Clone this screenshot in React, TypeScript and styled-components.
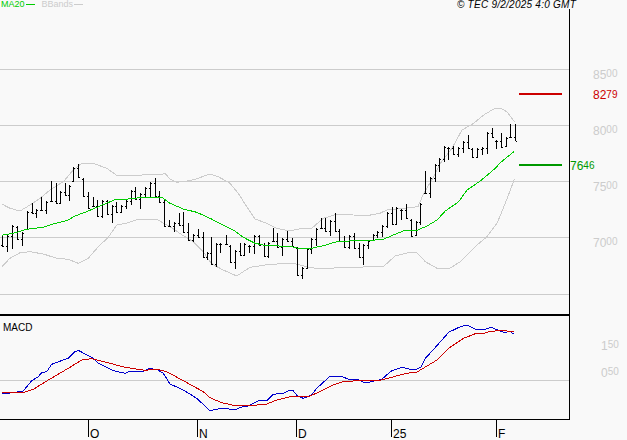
import React from "react";
import styled, { createGlobalStyle } from "styled-components";

type P = [number, number];

const Global = createGlobalStyle`
  html, body { margin: 0; padding: 0; background: #f9f9f9; overflow: hidden; }
  body { font-family: "Liberation Sans", Arial, sans-serif; }
`;

const Chart = styled.div`
  position: relative;
  width: 627px;
  height: 440px;
  background: #f9f9f9;
  display: flex;
  flex-direction: column;
  overflow: hidden;
`;

const Header = styled.header`
  width: 576px;
  height: 9px;
  display: flex;
  justify-content: space-between;
  line-height: 9px;
  white-space: nowrap;
`;

const Legend = styled.div`
  display: flex;
  align-items: center;
  padding-left: 1px;
  font-size: 9px;
`;

const LegendName = styled.span<{ $color: string }>`
  color: ${(p) => p.$color};
  margin-right: 1px;
`;

const LegendSwatch = styled.i<{ $color: string; $gap: number }>`
  display: block;
  width: 9px;
  height: 1px;
  background: ${(p) => p.$color};
  margin-right: ${(p) => p.$gap}px;
`;

const Copyright = styled.span`
  font-size: 10px;
  font-style: italic;
  letter-spacing: 0.25px;
  color: #000;
`;

const Body = styled.div`
  display: flex;
  flex: 1;
`;

const Plots = styled.div`
  width: 569px;
  display: flex;
  flex-direction: column;
`;

const Plot = styled.div<{ $height: number; $border: number }>`
  position: relative;
  height: ${(p) => p.$height}px;
  border-bottom: ${(p) => p.$border}px solid #000;
  border-right: 1px solid #000;
  box-sizing: content-box;
  width: 569px;
`;

const PlotSvg = styled.svg`
  display: block;
  width: 569px;
  height: 100%;
  shape-rendering: crispEdges;
`;

const PanelTitle = styled.span`
  position: absolute;
  left: 3px;
  top: 6px;
  font-size: 10px;
  line-height: 11px;
  color: #000;
`;

const TimeAxis = styled.div`
  position: relative;
  height: 20px;
`;

const Tick = styled.div<{ $x: number }>`
  position: absolute;
  left: ${(p) => p.$x}px;
  top: 0;
  height: 17px;
  border-left: 1px solid #000;
  padding-left: 1px;
  font-size: 12px;
  line-height: 12px;
  color: #000;
  display: flex;
  align-items: flex-end;
`;

const TickText = styled.span`
  position: relative;
  top: 3px;
`;

const ScaleLabel = styled.div<{ $x: number; $y: number; $color: string }>`
  position: absolute;
  left: ${(p) => p.$x}px;
  top: ${(p) => p.$y}px;
  color: ${(p) => p.$color};
  font-size: 12px;
  line-height: 12px;
  white-space: nowrap;
`;

const ScaleSmall = styled.span<{ $raise: number }>`
  font-size: 10px;
  position: relative;
  top: -${(p) => p.$raise}px;
`;

const seg = (ox: number, oy: number, pts: number[][]): P[] =>
  pts.map(([x, y]) => [ox + x / 3, oy + y / 3]);

const bars1 = [[7,258,292],[22,255,305],[37,226,296],[52,228,270],[65,245,287],[80,184,240],[95,160,193],[109,178,203],[122,142,182],[137,153,192],[152,94,155],[167,100,163],[179,123,163],[194,100,137],[208,105,152],[220,52,97],[235,43,85],[250,85,140],[265,125,177],[278,140,172],[291,150,200],[306,150,205],[321,150,195],[335,165,220],[349,155,190],[364,165,190],[379,150,177],[392,120,165],[406,110,150],[421,130,178],[436,110,145],[449,95,140],[464,85,140],[478,122,160],[493,150,230],[506,210,232],[521,215,245],[536,190,228],[550,185,250],[564,220,272],[578,252,277],[593,238,265],[608,245,325],[621,305,330]];
const bars2 = [[4,262,345],[18,280,350],[31,280,308],[47,255,285],[60,285,338],[76,300,357],[89,280,317],[103,280,318],[118,285,308],[133,255,312],[147,255,288],[161,280,320],[175,275,323],[190,233,275],[202,250,295],[217,265,317],[232,242,275],[247,265,290],[260,290,377],[275,350,387],[290,295,358],[304,265,312],[318,235,288],[332,205,238],[346,205,245],[361,210,258],[374,188,247],[388,238,275],[403,258,295],[418,255,298],[432,248,298],[446,280,323],[460,283,345],[473,270,298],[488,252,272],[502,242,263],[517,225,262],[531,185,235],[545,172,225],[559,172,225],[574,178,210],[587,162,208],[602,208,260],[617,212,258]];
const bars3 = [[10,370,435],[24,273,343],[38,290,355],[53,252,305],[67,235,275],[80,198,245],[94,200,240],[109,198,225],[123,200,232],[138,183,220],[152,165,208],[166,205,235],[180,205,235],[194,200,225],[209,155,223],[224,145,175],[238,180,207],[252,160,205],[266,170,200],[280,132,175],[294,132,182]];

type Bar = { x: number; top: number; bottom: number };
const toBars = (ox: number, oy: number, rows: number[][]): Bar[] =>
  rows.map(([x, t, b]) => ({ x: Math.round(ox + x / 3), top: Math.round(oy + t / 3), bottom: Math.round(oy + b / 3) }));
const bars: Bar[] = [...toBars(0, 150, bars1), ...toBars(210, 150, bars2), ...toBars(417, 80, bars3)];

const clamp = (v: number, a: number, b: number) => Math.max(a, Math.min(b, v));
const closes = bars.map((b, i) => {
  const n = bars[i + 1];
  if (!n) return b.bottom;
  const mid = (n.top + n.bottom) / 2;
  return mid < (b.top + b.bottom) / 2 ? b.top + 1 : b.bottom - 1;
});
const opens = bars.map((b, i) => (i === 0 ? b.bottom - 2 : clamp(closes[i - 1], b.top + 1, b.bottom - 1)));

const ma: P[] = [
  ...seg(0, 150, [[5,256],[40,250],[80,238],[130,232],[160,222],[200,212],[225,198],[265,183],[300,168],[345,149],[385,147],[420,143],[485,142],[510,160],[550,177],[590,187]]),
  ...seg(210, 150, [[0,205],[40,225],[70,240],[100,262],[135,280],[170,287],[240,289],[275,297],[305,295],[340,287],[380,275],[435,272],[460,273],[520,268],[550,255],[585,241]]),
  ...seg(417, 80, [[0,451],[30,438],[60,420],[85,393],[125,365],[150,330],[190,303],[235,265],[250,248],[292,214]]),
];
const upper: P[] = [
  ...seg(0, 150, [[5,162],[30,175],[60,183],[90,165],[120,145],[150,120],[190,95],[220,60],[245,40],[280,40],[320,55],[350,76],[420,76],[445,72],[480,75],[495,70],[510,87],[530,97],[570,92],[590,86]]),
  ...seg(210, 150, [[0,72],[25,80],[60,100],[85,130],[110,170],[135,207],[170,220],[200,235],[240,243],[275,235],[305,235],[340,205],[380,193],[430,195],[470,197],[510,190],[530,180],[580,175]]),
  ...seg(417, 80, [[3,380],[20,340],[50,290],[70,250],[105,205],[135,150],[170,130],[200,105],[230,87],[250,85],[270,95],[292,125]]),
];
const lower: P[] = [
  ...seg(0, 150, [[5,350],[30,325],[60,308],[90,305],[130,312],[170,325],[205,328],[235,340],[265,325],[295,290],[325,262],[350,225],[385,218],[415,208],[470,208],[510,230],[550,257],[580,275],[610,305]]),
  ...seg(210, 150, [[0,335],[15,347],[40,360],[80,378],[120,352],[180,343],[250,340],[290,350],[330,357],[400,352],[520,350],[555,318],[600,307]]),
  ...seg(417, 80, [[0,518],[25,545],[60,565],[95,567],[130,545],[180,495],[210,470],[240,430],[265,370],[292,298]]),
];
const macd: P[] = [
  ...seg(0, 310, [[6,250],[25,252],[35,247],[68,245],[95,212],[115,200],[125,188],[140,185],[155,163],[190,150],[205,145],[225,125],[235,121],[280,145],[295,160],[340,182],[375,190],[390,184],[430,184],[445,176],[470,178],[490,190],[510,222],[550,240],[590,265]]),
  ...seg(210, 310, [[0,302],[40,294],[75,300],[90,292],[115,288],[145,273],[170,272],[190,253],[220,250],[235,242],[248,240],[262,258],[280,265],[305,255],[320,235],[360,199],[395,199],[420,210],[440,208],[460,216],[480,216],[515,208],[545,182],[575,172],[600,178]]),
  ...seg(417, 310, [[0,177],[12,172],[25,145],[50,118],[95,67],[130,50],[150,45],[175,57],[200,60],[222,52],[260,67],[280,65],[292,73]]),
];
const signal: P[] = [
  ...seg(0, 310, [[6,246],[75,246],[100,238],[150,207],[205,175],[245,150],[275,146],[330,160],[375,172],[435,181],[470,178],[500,185],[550,212],[610,245]]),
  ...seg(210, 310, [[0,263],[35,278],[80,288],[120,287],[170,282],[200,270],[250,258],[300,258],[340,240],[370,225],[395,216],[430,213],[505,212],[540,203],[590,190]]),
  ...seg(417, 310, [[0,186],[30,168],[60,150],[95,115],[140,85],[175,71],[200,70],[220,64],[250,62],[292,64]]),
];

const pts = (p: P[]) => p.map(([x, y]) => `${x.toFixed(1)},${y.toFixed(1)}`).join(" ");

const Line = ({ data, color, width = 1 }: { data: P[]; color: string; width?: number }) => (
  <polyline points={pts(data)} fill="none" stroke={color} strokeWidth={width} />
);

const Grid = ({ y }: { y: number }) => <line x1={0} x2={569} y1={y} y2={y} stroke="#cccccc" strokeWidth={1} />;

const Scale = ({ big, small, x, y, color = "#cccccc", raise = 2 }: { big: string; small: string; x: number; y: number; color?: string; raise?: number }) => (
  <ScaleLabel $x={x} $y={y} $color={color}>
    {big}
    <ScaleSmall $raise={raise}>{small}</ScaleSmall>
  </ScaleLabel>
);

const ticks = [
  { x: 88, t: "O" },
  { x: 197, t: "N" },
  { x: 296, t: "D" },
  { x: 391, t: "25" },
  { x: 496, t: "F" },
];

export default function App() {
  return (
    <Chart>
      <Global />
      <Header>
        <Legend>
          <LegendName $color="#00cc00">MA20</LegendName>
          <LegendSwatch $color="#00cc00" $gap={7} />
          <LegendName $color="#cccccc">BBands</LegendName>
          <LegendSwatch $color="#cccccc" $gap={0} />
        </Legend>
        <Copyright>© TEC 9/2/2025 4:0 GMT</Copyright>
      </Header>
      <Body>
        <Plots>
          <Plot $height={305} $border={2}>
            <PlotSvg viewBox="0 9 569 305">
              {[69.5, 125.5, 181.5, 237.5, 294.5].map((y) => <Grid key={y} y={y} />)}
              <Line data={upper} color="#cccccc" />
              <Line data={lower} color="#cccccc" />
              <g stroke="#000000" strokeWidth={1}>
                {bars.map((b, i) => (
                  <g key={i}>
                    <line x1={b.x + 0.5} x2={b.x + 0.5} y1={b.top} y2={b.bottom} strokeWidth={1} />
                    <line x1={b.x - 1} x2={b.x} y1={opens[i] + 0.5} y2={opens[i] + 0.5} />
                    <line x1={b.x + 1} x2={b.x + 2} y1={closes[i] + 0.5} y2={closes[i] + 0.5} />
                  </g>
                ))}
              </g>
              <Line data={ma} color="#00cc00" />
              <line x1={519} x2={562} y1={93.5} y2={93.5} stroke="#cc0000" strokeWidth={2} />
              <line x1={519} x2={562} y1={164.5} y2={164.5} stroke="#009900" strokeWidth={2} />
            </PlotSvg>
          </Plot>
          <Plot $height={103} $border={1}>
            <PlotSvg viewBox="0 316 569 103">
              <Grid y={380.5} />
              <Line data={macd} color="#0000cc" />
              <Line data={signal} color="#cc0000" />
            </PlotSvg>
            <PanelTitle>MACD</PanelTitle>
          </Plot>
          <TimeAxis>
            {ticks.map((t) => (
              <Tick key={t.t} $x={t.x}>
                <TickText>{t.t}</TickText>
              </Tick>
            ))}
          </TimeAxis>
        </Plots>
      </Body>
      <Scale big="85" small="00" x={593} y={69} />
      <Scale big="80" small="00" x={593} y={125} />
      <Scale big="75" small="00" x={593} y={181} />
      <Scale big="70" small="00" x={593} y={237} />
      <Scale big="82" small="79" x={593} y={89} color="#cc0000" raise={1} />
      <Scale big="76" small="46" x={570} y={160} color="#009900" raise={1} />
      <Scale big="1" small="50" x={601} y={340} />
      <Scale big="0" small="50" x={601} y={367} />
    </Chart>
  );
}
